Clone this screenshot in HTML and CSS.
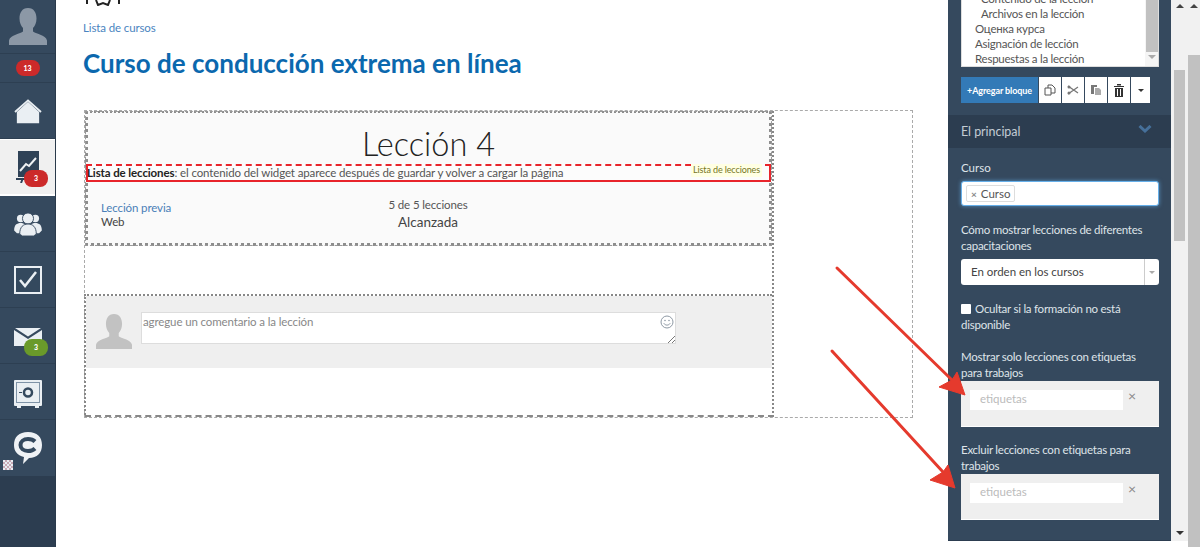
FILE: index.html
```html
<!DOCTYPE html>
<html lang="es">
<head>
<meta charset="utf-8">
<title>Curso de conducción extrema en línea</title>
<link rel="stylesheet" href="styles.css">
</head>
<body>
<div class="app">
  <nav class="side">
    <div class="nav nav-avatar">
      <svg width="38" height="38" viewBox="0 0 38 38"><path fill="#8c98a6" d="M19 0c6 0 8.500 5 8.500 10.500 0 4-1.500 7.500-3.500 9.500v3.500c2 2 13 3.500 14 9V37H0v-4.500c1-5.500 12-7 14-9V20c-2-2-3.500-5.500-3.500-9.500C10.500 5 13 0 19 0z"/></svg>
    </div>
    <div class="nav nav-count"><span class="badge red">13</span></div>
    <div class="nav nav-home">
      <svg width="28" height="26" viewBox="0 0 30 28"><path fill="#eaeff3" d="M15 3 27 14v12H3V14z"/><path fill="none" stroke="#eaeff3" stroke-width="2" d="M1 14 15 1.500 29 14"/></svg>
    </div>
    <div class="nav active">
      <svg width="26" height="32" viewBox="0 0 26 32"><rect x="3" y="0" width="21" height="26" fill="#2f4257"/><path fill="none" stroke="#eef1f4" stroke-width="2" d="M5 20l6-7 3 2 7-8"/><path stroke="#2f4257" stroke-width="2" d="M1 28h22M8 27l-2 5"/></svg>
      <span class="badge red over">3</span>
    </div>
    <div class="nav">
      <svg width="28" height="24" viewBox="0 0 30 26"><g fill="#eaeff3"><circle cx="7" cy="7" r="4"/><circle cx="23" cy="7" r="4"/><path d="M0 20c0-6 3-8 7-8s7 2 7 8l-3 3H3zM16 20c0-6 3-8 7-8s7 2 7 8l-3 3h-8z"/></g><circle cx="15" cy="7" r="6" fill="#eaeff3" stroke="#35495e"/><path fill="#eaeff3" stroke="#35495e" d="M6 24c0-8 4-11 9-11s9 3 9 11l-3 2H9z"/></svg>
    </div>
    <div class="nav">
      <svg width="28" height="28" viewBox="0 0 28 28"><rect x="1" y="1" width="26" height="26" fill="#34495e" stroke="#eaeff3" stroke-width="2"/><path fill="none" stroke="#eaeff3" stroke-width="2.500" d="M6 14l5 6L22 6"/></svg>
    </div>
    <div class="nav nav-mail">
      <svg width="28" height="18" viewBox="0 0 28 18"><path fill="#eaeff3" d="M0 2l14 9 14-9v16H0zM1 0h26L14 8.500z"/></svg>
      <span class="badge green over">3</span>
    </div>
    <div class="nav nav-safe">
      <svg width="28" height="28" viewBox="0 0 28 28"><rect width="28" height="26" rx="1" fill="#eaeff3"/><rect x="2.500" y="2.500" width="23" height="20" fill="none" stroke="#7f93a7"/><circle cx="14" cy="12.500" r="4" fill="none" stroke="#34495e" stroke-width="2.500"/><path stroke="#34495e" d="M5 12.500h3"/><path fill="#eaeff3" d="M3 26h4v2H3zM21 26h4v2h-4z"/></svg>
    </div>
    <div class="nav nav-chat">
      <svg width="28" height="32" viewBox="0 0 28 32"><path fill="#eff2f5" d="M14 0c9 0 14 5 14 13s-5 13-13 13l-6 6 1-7C3 23 0 19 0 13 0 5 5 0 14 0z"/><path fill="none" stroke="#34495e" stroke-width="4" d="M21 9.500C19 7.500 17 7 14 7 9.500 7 6.500 9.500 6.500 13S9.500 19 14 19c3 0 5-.5 7-2.500"/></svg>
      <span class="qr"></span>
    </div>
    <div class="nav-rest"></div>
  </nav>

  <main class="main">
    <div class="top-icon">
      <svg width="36" height="6" viewBox="0 0 36 6"><path fill="none" stroke="#222" stroke-width="2" d="M3 0v4M35 0v4M12 0l2 5 5-2 5 2 2-5"/></svg>
    </div>
    <a class="crumb">Lista de cursos</a>
    <h1 class="title">Curso de conducción extrema en línea</h1>

    <div class="canvas">
      <div class="col-left">
        <section class="lesson">
          <h2 class="lesson-title">Lección 4</h2>
          <div class="widget">
            <span><b>Lista de lecciones</b>: el contenido del widget aparece después de guardar y volver a cargar la página</span>
            <span class="widget-tag">Lista de lecciones</span>
          </div>
          <div class="lesson-row">
            <div class="prev"><a>Lección previa</a><span>Web</span></div>
            <div class="progress"><span>5 de 5 lecciones</span><strong>Alcanzada</strong></div>
          </div>
        </section>
        <div class="spacer-block"></div>
        <section class="comment-block">
          <div class="comment">
            <svg class="comment-avatar" width="36" height="36" viewBox="0 0 38 38"><path fill="#c2c2c2" d="M19 0c6 0 8.500 5 8.500 10.500 0 4-1.500 7.500-3.500 9.500v3.500c2 2 13 3.500 14 9V37H0v-4.500c1-5.500 12-7 14-9V20c-2-2-3.500-5.500-3.500-9.500C10.500 5 13 0 19 0z"/></svg>
            <div class="comment-box">
              <span>agregue un comentario a la lección</span>
              <svg class="smile" width="14" height="14" viewBox="0 0 14 14"><circle cx="7" cy="7" r="6" fill="none" stroke="#8f9aa5"/><circle cx="5" cy="5.500" r=".8" fill="#8f9aa5"/><circle cx="9" cy="5.500" r=".8" fill="#8f9aa5"/><path fill="none" stroke="#8f9aa5" d="M3.800 8.300c1.500 2.400 4.900 2.400 6.400 0"/></svg>
              <svg class="grip" width="8" height="8" viewBox="0 0 8 8"><path stroke="#777" d="M1 8l7-7M5 8l3-3"/></svg>
            </div>
          </div>
        </section>
      </div>
      <div class="col-right"></div>
    </div>
  </main>

  <aside class="panel">
    <div class="list">
      <div class="list-body">
        <div class="li sub">Contenido de la lección</div>
        <div class="li sub">Archivos en la lección</div>
        <div class="li">Оценка курса</div>
        <div class="li">Asignación de lección</div>
        <div class="li">Respuestas a la lección</div>
      </div>
      <div class="list-bar"><span class="list-thumb"></span><span class="tri-down light"></span></div>
    </div>
    <div class="toolbar">
      <button class="add">+Agregar bloque</button>
      <button class="tool"><svg width="12" height="12" viewBox="0 0 12 12"><path fill="none" stroke="#555" d="M1 4h6v7H1zM4 4V1h4l3 3v5H7"/></svg></button>
      <button class="tool"><svg width="12" height="10" viewBox="0 0 12 10"><path fill="none" stroke="#777" stroke-width="1.300" d="M1 1l10 7M1 9l10-7"/><circle cx="2" cy="2" r="1.500" fill="#777"/><circle cx="2" cy="8" r="1.500" fill="#777"/></svg></button>
      <button class="tool"><svg width="12" height="12" viewBox="0 0 12 12"><path fill="#777" d="M1 1h6v2H4v7H1z"/><path fill="#aaa" d="M5 4h4l2 2v5H5z"/></svg></button>
      <button class="tool"><svg width="12" height="13" viewBox="0 0 12 13"><path fill="#333" d="M1 2h10v1H1zM4 0h4v1.500H4zM2 4h8v9H2z"/><path stroke="#fff" d="M4.500 5v7M7.500 5v7"/></svg></button>
      <button class="tool caret"><span class="tri-down small"></span></button>
    </div>
    <div class="section-head">
      <span>El principal</span>
      <svg width="14" height="8" viewBox="0 0 14 8"><path fill="none" stroke="#46709a" stroke-width="3" d="M1.500 1 7 6l5.500-5"/></svg>
    </div>
    <form class="fields">
      <label class="lab lab-curso">Curso</label>
      <div class="tag-input"><span class="chip"><i>×</i>Curso</span></div>
      <label class="lab lab-how">Cómo mostrar lecciones de diferentes capacitaciones</label>
      <div class="select"><span class="select-text">En orden en los cursos</span><span class="select-arrow"><span class="tri-down light small"></span></span></div>
      <div class="check"><span class="box"></span>Ocultar si la formación no está disponible</div>
      <label class="lab lab-show">Mostrar solo lecciones con etiquetas para trabajos</label>
      <div class="tags"><div class="tags-input">etiquetas</div><span class="tags-x">×</span></div>
      <label class="lab lab-excl">Excluir lecciones con etiquetas para trabajos</label>
      <div class="tags"><div class="tags-input">etiquetas</div><span class="tags-x">×</span></div>
    </form>
  </aside>

  <div class="bar bar-inner">
    <span class="tri-up"></span>
    <span class="thumb thumb-inner"></span>
    <span class="tri-down"></span>
  </div>
  <div class="bar bar-outer">
    <span class="tri-up"></span>
    <span class="thumb thumb-outer"></span>
  </div>
</div>

<svg class="arrows" width="1200" height="547" viewBox="0 0 1200 547">
  <g fill="#e53a2d" stroke="#e53a2d">
    <path fill="none" stroke-width="3" stroke-linecap="round" d="M837 268 952 380"/>
    <path stroke-width="1" d="M965 395 957 372 952 380 939 387z"/>
    <path fill="none" stroke-width="3" stroke-linecap="round" d="M832 351 943 472"/>
    <path stroke-width="1" d="M955 488 948 465 943 472 930 480z"/>
  </g>
</svg>
</body>
</html>
```

FILE: styles.css
```css
* { box-sizing: border-box; }
html, body { margin: 0; height: 100%; overflow: hidden; background: #fff; }
body { font-family: "Lato", "Open Sans", sans-serif; font-size: 11.500px; letter-spacing: -.12px; color: #444; }
.app { display: flex; width: 1200px; height: 547px; }

/* Left navigation */
.side { width: 56px; flex: none; display: flex; flex-direction: column; background: #35495e; border-right: 1px solid #2a3a4b; }
.nav { position: relative; height: 56px; flex: none; display: flex; align-items: center; justify-content: center; border-bottom: 1px solid #2d3f52; }
.nav-avatar { height: 54px; align-items: flex-start; padding: 8px 0 0; }
.nav-count { height: 29px; }
.nav-home { padding-top: 2px; }
.nav-mail { padding-top: 2px; }
.nav-safe { padding-top: 4px; }
.nav.active { height: 57px; background: #f0f0f0; border-bottom: 2px solid #fff; border-top: 1px solid #fff; }
.nav-chat { border-bottom: 0; }
.nav-rest { flex: 1; background: #2c3d50; }
.badge { display: inline-block; min-width: 24px; height: 16px; border-radius: 8px; font-size: 7px; line-height: 16px; font-weight: 900; text-align: center; color: #fff; letter-spacing: 0; }
.badge.red { background: #cc2a2a; }
.badge.green { background: #6a9a2a; }
.badge.over { position: absolute; left: 24px; top: 30px; height: 17px; line-height: 17px; }
.nav:not(.active) > .badge.over { top: 31px; }
.qr { position: absolute; left: 3px; top: 40px; width: 10px; height: 10px; background: repeating-conic-gradient(#c7a8b4 0 25%, #e9edf2 0 50%) 0 0 / 4px 4px; }

/* Main content */
.main { width: 892px; flex: none; padding: 0 0 0 28px; }
.top-icon { height: 6px; overflow: hidden; }
.top-icon svg { display: block; }
.crumb { display: block; margin: 14px 0 0 -1px; font-size: 11.500px; line-height: 15px; color: #4a84c0; }
.title { margin: 13px 0 0 -1px; font-size: 26px; line-height: 30px; font-weight: 700; letter-spacing: 0; color: #0b68ae; }
.canvas { display: flex; width: 829px; height: 308px; margin-top: 32px; border: 1px dashed #aaa; }
.col-left { width: 689px; flex: none; display: flex; flex-direction: column; border-right: 2px dotted #888; border-bottom: 2px dashed #888; }
.col-right { flex: 1; }

.lesson { height: 135px; background: #fafafa; border: 3px dotted #8d8d8d; border-top-width: 2px; outline: 1px dashed #9a9a9a; outline-offset: -1px; }
.lesson-title { margin: 0; padding-top: 12px; height: 51px; text-align: center; font-size: 32.500px; line-height: 38px; font-weight: 300; letter-spacing: 0; color: #222; }
.widget { position: relative; height: 18px; margin: 0 -2px; background: #fcfcfc; border: 2px solid #e8242b; border-top-style: dashed; font-size: 11.500px; line-height: 14px; letter-spacing: -.115px; color: #555; white-space: nowrap; text-indent: -1px; }
.widget b { color: #222; }
.widget-tag { position: absolute; right: 7px; top: -2px; height: 13px; padding: 0 2px; background: #ffffe3; font-size: 9px; line-height: 12px; color: #76761f; text-indent: 0; }
.lesson-row { display: flex; padding: 15px 0 0 13px; }
.prev { width: 241px; display: flex; flex-direction: column; line-height: 14px; padding-top: 4px; }
.prev a { color: #4a7fb8; }
.prev span { color: #444; }
.progress { width: 172px; display: flex; flex-direction: column; align-items: center; }
.progress span { line-height: 15px; color: #555; }
.progress strong { font-size: 13.500px; line-height: 20px; font-weight: 400; letter-spacing: 0; color: #444; }

.spacer-block { height: 48px; }
.comment-block { flex: 1; border-top: 2px dotted #888; border-left: 2px dotted #888; margin-left: -1px; }
.comment { height: 72px; display: flex; align-items: flex-start; gap: 9px; padding: 16px 0 0 10px; background: #efefef; }
.comment-avatar { margin-top: 2px; flex: none; }
.comment-box { position: relative; width: 535px; height: 32px; background: #fff; border: 1px solid #ddd; padding: 1px 0 0 1px; color: #888; font-size: 11.500px; line-height: 16px; }
.smile { position: absolute; right: 1px; top: 2px; }
.grip { position: absolute; right: 0; bottom: 0; }

/* Right panel */
.panel { width: 223px; height: 541px; flex: none; background: #35495e; color: #dfe4e9; overflow: hidden; display: flex; flex-direction: column; border-bottom: 1px solid #2c3d50; letter-spacing: -.25px; }
.list { display: flex; height: 67px; width: 198px; flex: none; margin-left: 13px; background: #fff; border: 1px solid #ddd; border-top: 0; overflow: hidden; }
.list-body { flex: 1; display: flex; flex-direction: column; justify-content: flex-end; padding: 0 0 0 13px; color: #555; line-height: 15px; }
.li.sub { padding-left: 6px; }
.list-bar { width: 13px; display: flex; flex-direction: column; align-items: center; gap: 3px; background: #f5f5f5; }
.list-thumb { width: 12px; height: 52px; flex: none; background: #c1c1c1; }
.toolbar { display: flex; gap: 1px; height: 26px; margin: 10px 0 0 13px; flex: none; }
.toolbar button { border: 0; padding: 0; font: inherit; display: flex; align-items: center; justify-content: center; }
.toolbar .add { width: 77px; background: #337ab7; color: #fff; font-weight: 700; font-size: 9px; letter-spacing: -.1px; white-space: nowrap; }
.tool { width: 22px; background: #fff; }
.toolbar .caret { width: 19px; }
.section-head { height: 33px; margin-top: 12px; flex: none; display: flex; justify-content: space-between; align-items: center; padding: 0 19px 1px 13px; background: #2c3d50; color: #c3ccd4; font-size: 12.500px; letter-spacing: -.05px; }
.section-head svg { margin-bottom: 4px; }
.fields { display: flex; flex-direction: column; padding: 0 12px 0 13px; }
.lab { display: block; line-height: 16px; }
.lab-curso { margin-top: 12px; letter-spacing: 0; }
.lab-how { margin-top: 16px; }
.lab-show { margin-top: 16px; }
.lab-excl { margin-top: 15px; }
.tag-input { height: 25px; margin-top: 5px; background: #fff; border: 1px solid #66afe9; border-radius: 3px; box-shadow: 0 0 4px rgba(102,175,233,.7); padding: 3px 4px; }
.chip { display: inline-flex; align-items: center; height: 17px; width: 49px; padding-left: 4px; border: 1px solid #ddd; border-radius: 2px; background: #fff; color: #555; font-size: 11.500px; letter-spacing: 0; }
.chip i { font-style: normal; font-weight: 700; font-size: 10px; color: #888; margin-right: 4px; }
.select { display: flex; height: 26px; margin-top: 5px; background: #fff; border-radius: 3px; color: #444; line-height: 25px; letter-spacing: -.03px; }
.select-text { flex: 1; padding-left: 10px; }
.select-arrow { width: 15px; display: flex; align-items: center; justify-content: center; border-left: 1px solid #ccc; }
.check { margin-top: 16px; line-height: 16px; }
.box { display: inline-block; width: 10px; height: 10px; margin-right: 4px; background: #fff; border-radius: 1px; vertical-align: -1px; }
.tags { display: flex; align-items: flex-start; gap: 5px; height: 46px; padding: 9px 0 0 9px; background: #efefef; border: 1px solid #fff; border-width: 0 0 1px; }
.tags-input { width: 153px; height: 20px; background: #fff; color: #bbb; padding-left: 10px; line-height: 18px; letter-spacing: 0; }
.tags-x { color: #888; font-size: 14px; line-height: 11px; }

/* Scrollbars */
.bar { flex: none; display: flex; flex-direction: column; align-items: center; }
.bar-inner { width: 17px; height: 541px; background: #f1f1f1; padding-top: 4px; }
.bar-outer { width: 12px; height: 547px; background: #f1f1f1; padding-top: 4px; }
.thumb { display: block; background: #c1c1c1; flex: none; }
.thumb-inner { width: 11px; height: 171px; margin: 62px 0 290px; }
.thumb-outer { width: 12px; flex: 1; margin-top: 47px; }
.tri-up, .tri-down { display: block; width: 0; height: 0; flex: none; border-left: 4px solid transparent; border-right: 4px solid transparent; }
.tri-up { border-bottom: 4px solid #444; }
.tri-down { border-top: 4px solid #333; }
.tri-down.light { border-top-color: #aaa; }
.tri-down.small { border-left-width: 3px; border-right-width: 3px; border-top-width: 3px; }

/* Annotation arrows lie over the page */
.arrows { position: absolute; left: 0; top: 0; pointer-events: none; }
```
